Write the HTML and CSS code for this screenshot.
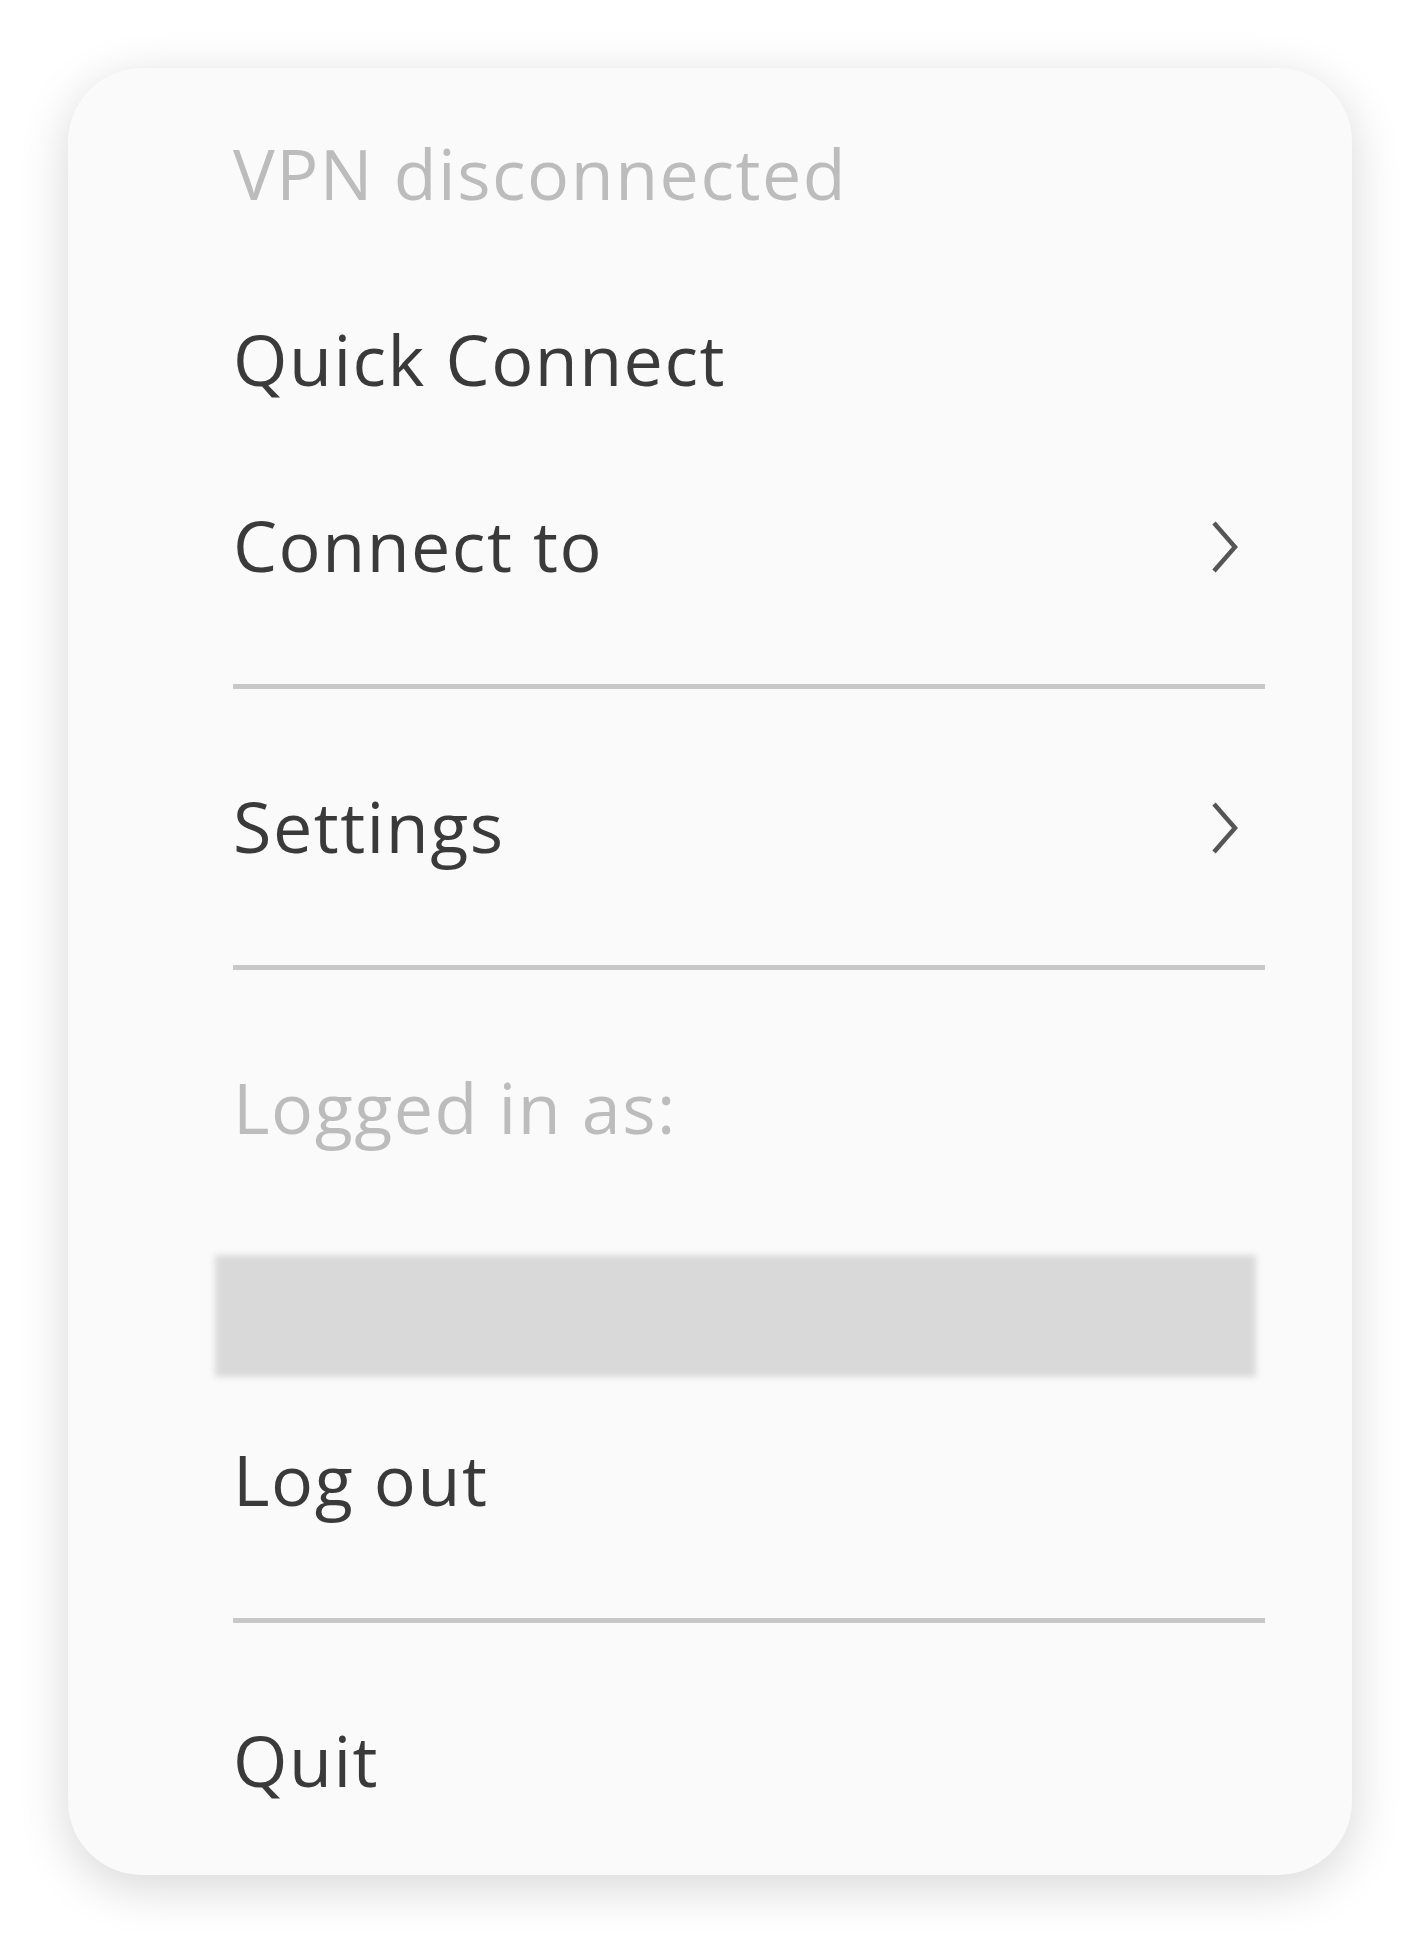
FILE: index.html
```
<!DOCTYPE html>
<html lang="en">
<head>
    <meta charset="UTF-8">
    <meta name="viewport" content="width=device-width, initial-scale=1.0">
    <title>VPN Menu</title>
    <link rel="stylesheet" href="styles.css">
</head>
<body>

    <div class="menu">
        <div class="item muted">VPN disconnected</div>
        <div class="item">Quick Connect</div>
        <div class="item">
            <span>Connect to</span>
            <svg class="chevron" viewBox="0 0 26 52"><polyline points="2,2 23,26 2,50"/></svg>
        </div>

        <div class="separator"></div>

        <div class="item">
            <span>Settings</span>
            <svg class="chevron" viewBox="0 0 26 52"><polyline points="2,2 23,26 2,50"/></svg>
        </div>

        <div class="separator"></div>

        <div class="item muted">Logged in as:</div>
        <!-- account name is hidden -->
        <div class="account"></div>
        <div class="item">Log out</div>

        <div class="separator"></div>

        <div class="item">Quit</div>
    </div>

</body>
</html>
```

FILE: styles.css
```
body {
    margin: 0;
    background-color: #fff;
    font-family: "Open Sans", "Noto Sans", sans-serif;
}

.menu {
    width: 1284px;
    margin: 68px;
    box-sizing: border-box;
    padding: 14px 87px 20px 165px;
    background-color: #fafafa;
    border-radius: 74px;
    box-shadow: 0 12px 50px rgba(0, 0, 0, 0.16);
}

.item {
    height: 186px;
    box-sizing: border-box;
    padding-bottom: 5px; /* nudge text up a little */
    display: flex;
    align-items: center;
    justify-content: space-between;
    font-size: 70px;
    line-height: 120px;
    letter-spacing: 1.5px;
    color: #3a3a3a;
}

.muted {
    color: #bcbcbc;
}

.chevron {
    width: 26px;
    height: 52px;
    margin-right: 27px;
    margin-top: 5px;
    fill: none;
    stroke: #555;
    stroke-width: 4.5;
}

.separator {
    height: 5px;
    margin: 44px 0 46px;
    background-color: #c8c8c8;
}

.account {
    height: 122px;
    width: 1041px;
    margin: 53px 0 11px -18px;
    background-color: #d9d9d9;
    filter: blur(3px);
}
```
